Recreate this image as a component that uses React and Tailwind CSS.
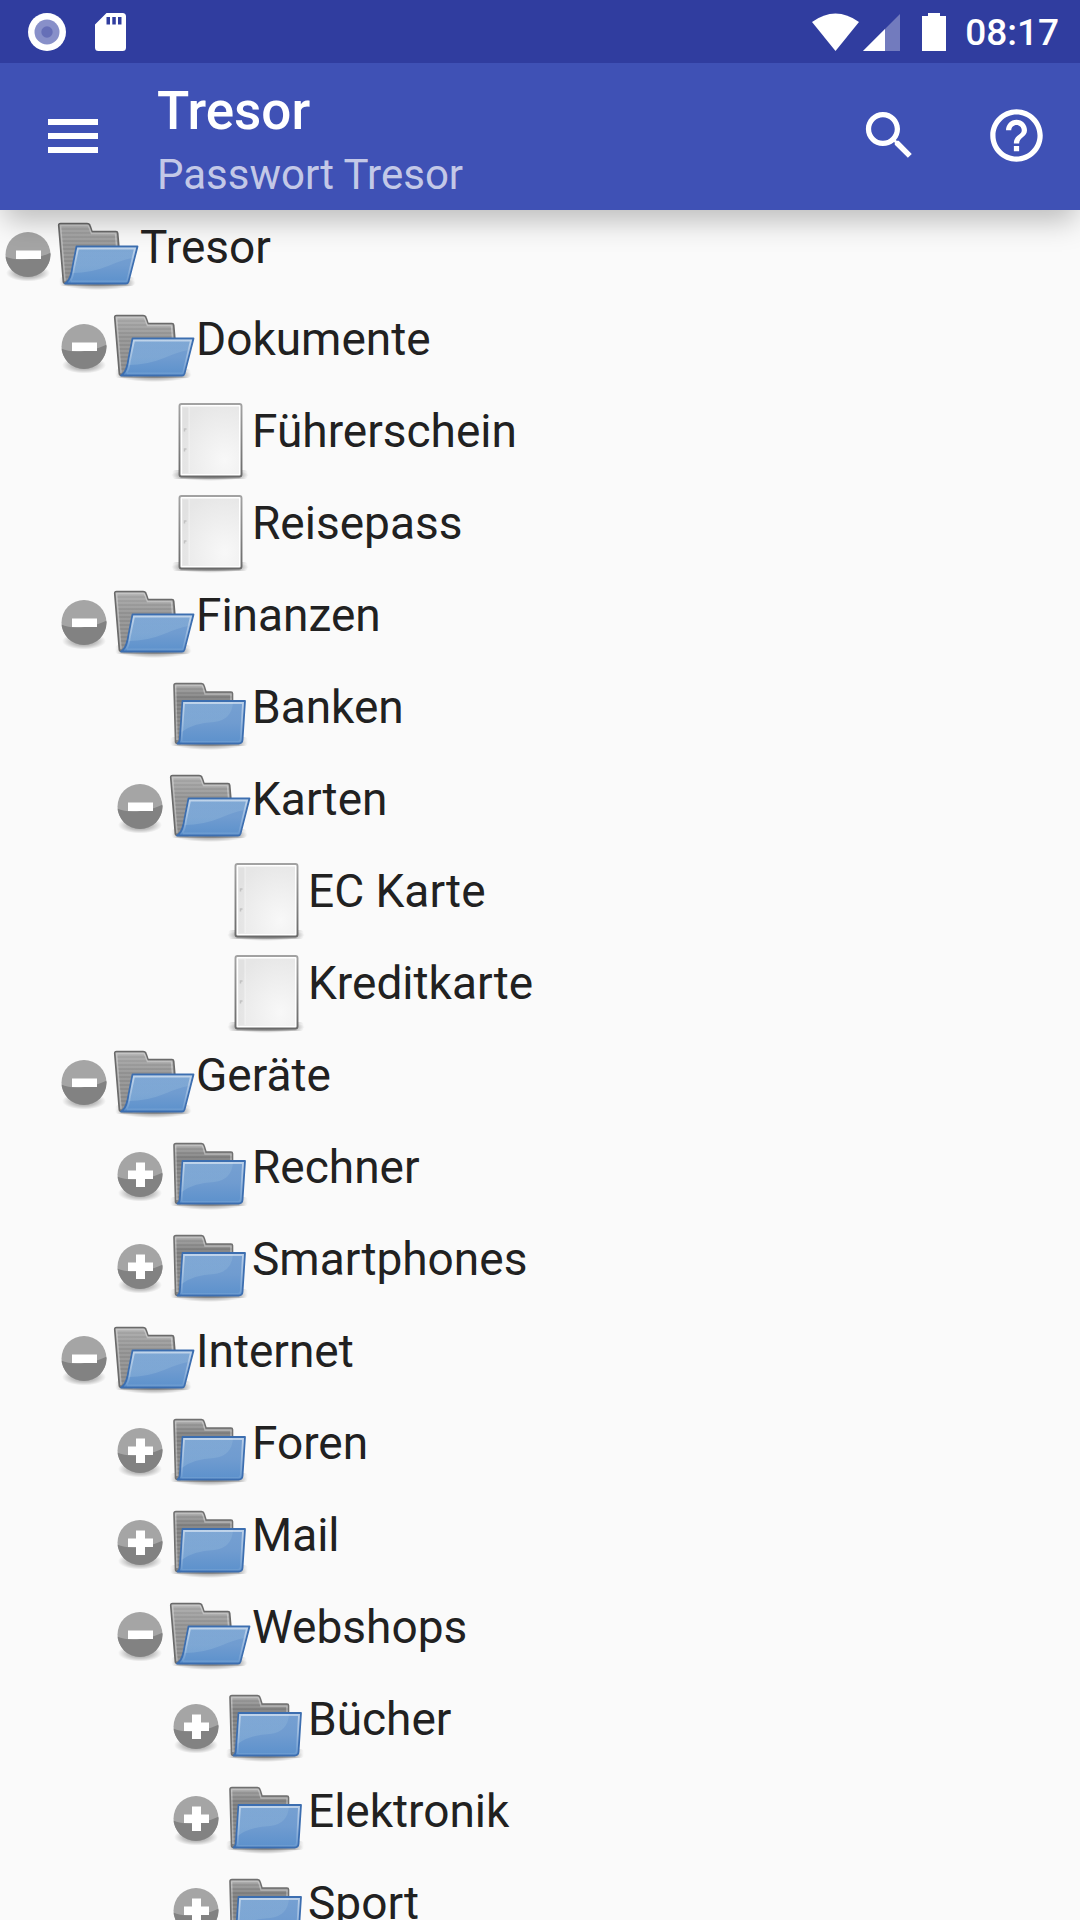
const TREE = [
  ["Tresor", 0, "open", "minus"],
  ["Dokumente", 1, "open", "minus"],
  ["Führerschein", 2, "page", null],
  ["Reisepass", 2, "page", null],
  ["Finanzen", 1, "open", "minus"],
  ["Banken", 2, "closed", null],
  ["Karten", 2, "open", "minus"],
  ["EC Karte", 3, "page", null],
  ["Kreditkarte", 3, "page", null],
  ["Geräte", 1, "open", "minus"],
  ["Rechner", 2, "closed", "plus"],
  ["Smartphones", 2, "closed", "plus"],
  ["Internet", 1, "open", "minus"],
  ["Foren", 2, "closed", "plus"],
  ["Mail", 2, "closed", "plus"],
  ["Webshops", 2, "open", "minus"],
  ["Bücher", 3, "closed", "plus"],
  ["Elektronik", 3, "closed", "plus"],
  ["Sport", 3, "closed", "plus"],
];

const INDENT = ["pl-0", "pl-[56px]", "pl-[112px]", "pl-[168px]"];

function Defs() {
  return (
    <svg className="absolute h-0 w-0" aria-hidden="true">
      <defs>
        <radialGradient id="shade">
          <stop offset="0" stopColor="#000" stopOpacity="0.45" />
          <stop offset="0.6" stopColor="#000" stopOpacity="0.22" />
          <stop offset="1" stopColor="#000" stopOpacity="0" />
        </radialGradient>
        <linearGradient id="shadeEdge" x1="0" y1="0" x2="1" y2="0">
          <stop offset="0" stopColor="#000" stopOpacity="0" />
          <stop offset="0.12" stopColor="#000" stopOpacity="0.2" />
          <stop offset="0.88" stopColor="#000" stopOpacity="0.2" />
          <stop offset="1" stopColor="#000" stopOpacity="0" />
        </linearGradient>
        <linearGradient id="back" x1="0" y1="0" x2="0" y2="1">
          <stop offset="0" stopColor="#a9a9a9" />
          <stop offset="0.35" stopColor="#919191" />
          <stop offset="1" stopColor="#858585" />
        </linearGradient>
        <linearGradient id="backClosed" x1="0" y1="0" x2="0" y2="1">
          <stop offset="0" stopColor="#a2a2a2" />
          <stop offset="0.25" stopColor="#7a7a7a" />
          <stop offset="1" stopColor="#858585" />
        </linearGradient>
        <pattern id="lines" width="84" height="4" patternUnits="userSpaceOnUse">
          <rect width="84" height="2" fill="#fff" fillOpacity="0.1" />
        </pattern>
        <linearGradient id="front" x1="0" y1="0" x2="0" y2="1">
          <stop offset="0" stopColor="#76a0d2" />
          <stop offset="0.5" stopColor="#709cd0" />
          <stop offset="1" stopColor="#5c91cc" />
        </linearGradient>
        <linearGradient id="gloss" x1="0" y1="0" x2="0" y2="1">
          <stop offset="0" stopColor="#b4d4e6" stopOpacity="0.15" />
          <stop offset="1" stopColor="#b4d4e6" stopOpacity="0.22" />
        </linearGradient>
        <linearGradient id="edge" x1="0" y1="0" x2="0" y2="1">
          <stop offset="0" stopColor="#fff" stopOpacity="0.5" />
          <stop offset="1" stopColor="#fff" stopOpacity="0.08" />
        </linearGradient>
        <radialGradient id="paper" cx="0.75" cy="0.8" r="0.9">
          <stop offset="0" stopColor="#f8f8f8" />
          <stop offset="0.5" stopColor="#efefef" />
          <stop offset="1" stopColor="#e6e6e6" />
        </radialGradient>
        <linearGradient id="paperEdge" x1="0" y1="0" x2="0" y2="1">
          <stop offset="0" stopColor="#a2a2a2" />
          <stop offset="1" stopColor="#6a6a6a" />
        </linearGradient>
        <clipPath id="disc">
          <circle cx="28" cy="44.500" r="22.500" />
        </clipPath>
      </defs>
    </svg>
  );
}

function Toggle({ kind }) {
  return (
    <button type="button" aria-label={kind === "plus" ? "Aufklappen" : "Zuklappen"} className="block h-[92px] w-[56px]">
      <svg viewBox="0 0 56 92" className="h-full w-full">
        <ellipse cx="28" cy="63" rx="22" ry="8.500" fill="url(#shade)" />
        <circle cx="28" cy="44.500" r="22.500" fill="#a5a5a5" />
        <path clipPath="url(#disc)" d="M4 46C16 52 36 50 52 42V70H4Z" fill="#828282" />
        <rect x="16" y="40.500" width="25" height="8.500" fill="#fff" />
        {kind === "plus" && <rect x="24" y="32.500" width="9" height="24.500" fill="#fff" />}
      </svg>
    </button>
  );
}

function OpenFolder() {
  return (
    <>
      <ellipse cx="42" cy="73" rx="38" ry="7" fill="url(#shade)" />
      <rect x="3" y="67" width="76" height="9" rx="4" fill="url(#shadeEdge)" />
      <path d="M4.500 13.500H31Q33.500 13.500 34 15.500L36 21.500H60Q61.500 21.500 61.700 23L63 38V60L20 73.500H9.500Q7.500 73.500 7.300 71.500L2.700 15.500Q2.500 13.500 4.500 13.500Z" fill="url(#back)" stroke="#6a6a6a" strokeWidth="1.600" />
      <path d="M4.500 14.500H32L35 22.500H60.500L62 40L20 70H9Z" fill="url(#lines)" />
      <path d="M9 71L4.500 15.500H31.500Q32.500 15.500 33 17L35.500 23.500H59.500L60.500 36" fill="none" stroke="#fff" strokeOpacity="0.35" strokeWidth="1.500" />
      <path d="M20.500 36.500H81.500L72.500 71.500Q72 73.500 70 73.500H9Q13.500 71 15.500 62Z" fill="url(#front)" stroke="#3c6eb0" strokeWidth="1.800" strokeLinejoin="round" />
      <path d="M21 37.500H80L76 48Q66 50 52 56Q35 63 16.500 63Z" fill="url(#gloss)" />
      <path d="M14.500 71Q17 67 18 58L22 38.500H79L71 71.500H15" fill="none" stroke="url(#edge)" strokeWidth="1.800" />
    </>
  );
}

function ClosedFolder() {
  return (
    <>
      <ellipse cx="41" cy="73" rx="38" ry="7" fill="url(#shade)" />
      <rect x="2" y="67" width="78" height="9" rx="4" fill="url(#shadeEdge)" />
      <path d="M8 13.500H33.500Q35.500 13.500 36 15.500L38 22H63Q64.500 22 64.500 23.500V60L12 73.500H9.500Q7.600 73.500 7.500 71.500L6 15.500Q6 13.500 8 13.500Z" fill="url(#backClosed)" stroke="#707070" strokeWidth="1.600" />
      <path d="M7 14.500H34.500L38 23H64V32L12 72H8.500Z" fill="url(#lines)" />
      <path d="M9 70L7.600 15.500H33.500Q34.500 15.500 35 17L37 24H63V30" fill="none" stroke="#fff" strokeOpacity="0.35" strokeWidth="1.500" />
      <path d="M14.500 31H77L74.500 70Q74.200 73.500 70.500 73.500H9.500Q11.500 72.500 11.800 69Z" fill="url(#front)" stroke="#3c6eb0" strokeWidth="1.800" strokeLinejoin="round" />
      <path d="M15.500 32H65Q64 50 46 52Q25 53 13.500 62Z" fill="url(#gloss)" />
      <path d="M13.500 71.500L16 33H75L72.800 69Q72.500 71.800 70 71.800H13.500" fill="none" stroke="url(#edge)" strokeWidth="1.800" />
    </>
  );
}

function Page() {
  return (
    <>
      <ellipse cx="42" cy="81" rx="39" ry="6" fill="url(#shade)" />
      <rect x="4" y="76" width="76" height="9" rx="4" fill="url(#shadeEdge)" />
      <rect x="11.500" y="10" width="62" height="72.500" rx="2" fill="#fff" stroke="url(#paperEdge)" strokeWidth="1.900" />
      <rect x="14" y="12.500" width="57" height="67.500" fill="url(#paper)" />
      <rect x="15" y="14" width="6" height="65" fill="#000" fillOpacity="0.02" />
      <path d="M21 13V79" stroke="#fff" strokeOpacity="0.5" />
      <path d="M16.500 37.500V35H18.500M16.500 57.500V55H18.500" fill="none" stroke="#c2c2c2" strokeWidth="1.500" />
    </>
  );
}

function NodeIcon({ kind }) {
  return (
    <svg viewBox="0 0 84 92" className="h-[92px] w-[84px] shrink-0" aria-hidden="true">
      {kind === "open" && <OpenFolder />}
      {kind === "closed" && <ClosedFolder />}
      {kind === "page" && <Page />}
    </svg>
  );
}

function StatusBar() {
  return (
    <div className="relative z-10 flex h-[63px] items-center bg-[#303d9f] pl-7 pr-[21px] text-white">
      <svg viewBox="0 0 38 38" className="size-[38px]" aria-hidden="true">
        <circle cx="19" cy="19" r="19" fill="#fff" />
        <circle cx="19" cy="19" r="12.500" fill="#8890c9" />
        <circle cx="19" cy="19" r="5.700" fill="#666fb7" />
      </svg>
      <svg viewBox="0 0 31 38" className="ml-[29px] h-[38px] w-[31px]" aria-hidden="true">
        <path fillRule="evenodd" fill="#fff" d="M11.500 0H27.500Q31 0 31 3.500V34.500Q31 38 27.500 38H3.500Q0 38 0 34.500V11.500ZM11.500 4V11.500H15V4ZM17.300 4V11.500H20.800V4ZM23 4V11.500H26.500V4Z" />
      </svg>
      <svg viewBox="0 0 47 38" className="ml-auto h-[38px] w-[47px]" aria-hidden="true">
        <path fill="#fff" d="M0 9Q23.500 -8 47 9L23.500 38Z" />
      </svg>
      <svg viewBox="0 0 37 38" className="ml-1 h-[38px] w-[37px]" aria-hidden="true">
        <path fill="#fff" fillOpacity="0.32" d="M37 1V38H0Z" />
        <path fill="#fff" d="M22 16V38H0Z" />
      </svg>
      <svg viewBox="0 0 24 38" className="ml-[22px] h-[38px] w-6" aria-hidden="true">
        <path fill="#fff" d="M6 0H18V3H24V38H0V3H6Z" />
      </svg>
      <time className="ml-[19px] pt-[2px] text-[37px] font-medium leading-[44px]">08:17</time>
    </div>
  );
}

export default function App() {
  return (
    <div className="h-screen overflow-hidden bg-[#fafafa] font-[Roboto,sans-serif]">
      <Defs />
      <StatusBar />
      <header className="relative flex h-[147px] items-center bg-[#3f51b5] pl-[41px] pr-8 text-white shadow-[0_14px_28px_-4px_rgba(0,0,0,0.26)]">
        <button type="button" aria-label="Menü" className="mb-[2px]">
          <svg viewBox="0 0 64 63" className="h-[63px] w-16" fill="currentColor">
            <path d="M7 15h50v6H7zM7 29h50v6H7zM7 43h50v6H7z" />
          </svg>
        </button>
        <div className="ml-[52px] flex flex-col pt-[14px]">
          <h1 className="text-[53px] font-medium leading-[62px]">Tresor</h1>
          <p className="text-[42px] leading-[66px] text-white/70">Passwort Tresor</p>
        </div>
        <button type="button" aria-label="Suchen" className="mb-[2px] ml-auto">
          <svg viewBox="0 0 24 24" className="size-[63px]" fill="currentColor">
            <path d="M15.500 14h-.79l-.28-.27C15.410 12.590 16 11.110 16 9.500 16 5.910 13.090 3 9.500 3S3 5.910 3 9.500 5.910 16 9.500 16c1.610 0 3.090-.59 4.230-1.570l.27.28v.79l5 4.990L20.490 19l-4.990-5zm-6 0C7.010 14 5 11.990 5 9.500S7.010 5 9.500 5 14 7.010 14 9.500 11.990 14 9.500 14z" />
          </svg>
        </button>
        <button type="button" aria-label="Hilfe" className="mb-[2px] ml-16">
          <svg viewBox="0 0 24 24" className="size-[63px]" fill="currentColor">
            <path d="M11 18h2v-2h-2v2zm1-16C6.480 2 2 6.480 2 12s4.480 10 10 10 10-4.480 10-10S17.520 2 12 2zm0 18c-4.410 0-8-3.590-8-8s3.590-8 8-8 8 3.590 8 8-3.590 8-8 8zm0-14c-2.210 0-4 1.790-4 4h2c0-1.100.9-2 2-2s2 .9 2 2c0 2-3 1.750-3 5h2c0-2.250 3-2.500 3-5 0-2.210-1.790-4-4-4z" />
          </svg>
        </button>
      </header>
      <ul>
        {TREE.map(([label, level, icon, toggle]) => (
          <li key={label} className={`flex h-[92px] items-start ${INDENT[level]}`}>
            <div className="w-[56px] shrink-0">{toggle && <Toggle kind={toggle} />}</div>
            <NodeIcon kind={icon} />
            <span className="text-[46px] leading-[74px] text-[#212121]">{label}</span>
          </li>
        ))}
      </ul>
    </div>
  );
}
